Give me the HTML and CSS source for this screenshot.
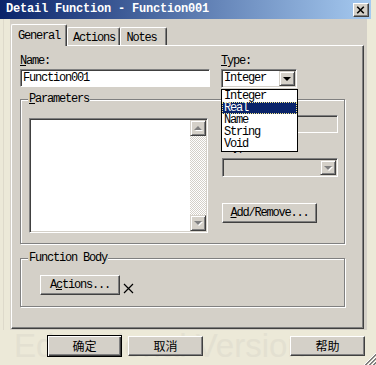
FILE: index.html
```html
<!DOCTYPE html>
<html lang="zh-CN">
<head>
<meta charset="UTF-8">
<title>Detail Function - Function001</title>
<link rel="stylesheet" href="styles.css">
</head>
<body>
<div class="window">
  <!-- 標題列 -->
  <div class="titlebar">
    <span class="title-text">Detail Function - Function001</span>
    <span class="close-btn">
      <svg width="16" height="14" viewBox="0 0 16 14"><path d="M4.5 3.5 L11.5 10.5 M11.5 3.5 L4.5 10.5" stroke="#000" stroke-width="1.7" fill="none"/></svg>
    </span>
  </div>

  <div class="frame">
    <div class="left-strip"></div>
    <div class="dialog">
      <div class="tabs">
        <div class="tab active">General</div>
        <div class="tab tab-actions">Actions</div>
        <div class="tab tab-notes">Notes</div>
      </div>

      <div class="panel">
        <div class="top-row">
          <div class="field name-field">
            <label class="lbl"><u>N</u>ame:</label>
            <div class="edit">Function001</div>
          </div>
          <div class="field type-field">
            <label class="lbl"><u>T</u>ype:</label>
            <div class="combo">
              <span class="combo-text">Integer</span>
              <span class="drop-btn"><i class="arrow-down"></i></span>
            </div>
            <!-- 展開的下拉清單 -->
            <ul class="droplist">
              <li>Integer</li>
              <li class="selected">Real</li>
              <li>Name</li>
              <li>String</li>
              <li>Void</li>
            </ul>
          </div>
        </div>

        <div class="group params-group">
          <div class="group-title"><u>P</u>arameters</div>
          <div class="params-body">
            <div class="listbox">
              <div class="list-area"></div>
              <div class="vscroll">
                <span class="sb-btn"><i class="arrow-up dim"></i></span>
                <span class="sb-track"></span>
                <span class="sb-btn"><i class="arrow-down dim"></i></span>
              </div>
            </div>
            <div class="param-side">
              <div class="edit disabled"></div>
              <label class="lbl side-lbl"><u>T</u>ype:</label>
              <div class="combo disabled">
                <span class="combo-text"></span>
                <span class="drop-btn"><i class="arrow-down dim"></i></span>
              </div>
              <div class="btn add-btn"><u>A</u>dd/Remove...</div>
            </div>
          </div>
        </div>

        <div class="group body-group">
          <div class="group-title">Function Body</div>
          <div class="fb-body">
            <div class="btn actions-btn">A<u>c</u>tions...</div>
            <svg class="x-mark" width="11" height="11" viewBox="0 0 11 11"><path d="M1 1 L10 10 M10 1 L1 10" stroke="#000" stroke-width="1.2" fill="none"/></svg>
          </div>
        </div>
      </div>
    </div>
  </div>

  <div class="footer">
    <div class="watermark">Educational Version</div>
    <div class="btn cjk default">确定</div>
    <div class="btn cjk cancel-btn">取消</div>
    <div class="btn cjk help-btn">帮助</div>
    <svg class="grip" width="13" height="13" viewBox="0 0 13 13">
      <path d="M13 1 L1 13 M13 5 L5 13 M13 9 L9 13" stroke="#fff" fill="none"/>
      <path d="M13 2 L2 13 M13 3 L3 13 M13 6 L6 13 M13 7 L7 13 M13 10 L10 13 M13 11 L11 13" stroke="#808080" fill="none"/>
    </svg>
  </div>
</div>
</body>
</html>
```

FILE: styles.css
```css
html, body {
margin: 0;
padding: 0;
}
body {
background: #ece9d8;
font-family: "Liberation Mono", "Noto Sans CJK SC", monospace;
font-size: 12px;
letter-spacing: -1.2px;
color: #000;
}
.window {
width: 376px; height: 365px;
position: relative;
overflow: hidden;
}

/* 標題列 */
.titlebar {
width: 371px; height: 19px;
box-sizing: border-box;
padding: 0 2px 0 6px;
display: flex; align-items: center; justify-content: space-between;
background: linear-gradient(90deg, #0a246a 0%, #a6caf0 100%);
}
.title-text {
color: #fff;
font-weight: bold;
letter-spacing: -0.2px;
line-height: 19px;
}
.close-btn {
width: 16px; height: 14px;
box-sizing: border-box;
display: flex;
background: #d4d0c8;
border: 1px solid; border-color: #fff #404040 #404040 #fff;
box-shadow: inset -1px -1px #808080;
}
.close-btn svg { margin: -1px 0 0 -1px; }

/* 外框 */
.frame {
display: flex;
height: 311px;
}
.left-strip {
width: 10px;
background: linear-gradient(90deg, #ece9d8 3px, #dedacb 3px, #dedacb 4px, #ece9d8 4px);
}
.dialog {
width: 357px;
background: #d4d0c8;
}

/* 分頁 */
.tabs {
height: 26px;
display: flex; align-items: flex-end;
padding-left: 1px;
}
.tab {
height: 18px;
box-sizing: border-box;
padding-top: 4px;
line-height: 12px;
text-align: center;
border-left: 1px solid #fff;
border-top: 1px solid #fff;
border-right: 1px solid #404040;
box-shadow: inset -1px 0 #808080;
border-radius: 2px 2px 0 0;
}
.tab.active {
width: 56px; height: 22px;
margin-bottom: -1px;
position: relative; z-index: 1;
background: #d4d0c8;
padding-top: 5px;
}
.tab-actions { width: 53px; padding-left: 1px; }
.tab-notes { width: 47px; padding-right: 4px; }

.panel {
width: 353px; height: 284px;
margin-left: 1px;
box-sizing: border-box;
border: 1px solid; border-color: #fff #404040 #404040 #fff;
box-shadow: inset -1px -1px #808080;
padding: 9px 0 0 8px;
}

/* 名稱與型別 */
.top-row {
display: flex;
gap: 11px;
}
.name-field { width: 190px; }
.type-field { width: 76px; position: relative; }
.lbl {
display: block;
height: 13px; line-height: 13px;
margin-bottom: 1px;
}
.edit {
height: 18px;
box-sizing: border-box;
border: 1px solid; border-color: #808080 #fff #fff #808080;
box-shadow: inset 1px 1px #404040;
background: #fff;
padding-left: 2px;
line-height: 16px;
}
.edit.disabled { background: #d4d0c8; width: 116px; }

.combo {
height: 19px;
box-sizing: border-box;
border: 1px solid; border-color: #808080 #fff #fff #808080;
box-shadow: inset 1px 1px #404040, inset -1px -1px #d4d0c8;
background: #fff;
display: flex; align-items: center; justify-content: space-between;
padding: 1px 1px 1px 2px;
}
.combo.disabled { background: #d4d0c8; width: 116px; }
.combo-text { line-height: 15px; }
.drop-btn {
width: 16px; height: 15px;
box-sizing: border-box;
display: flex; align-items: center; justify-content: center;
background: #d4d0c8;
border: 1px solid; border-color: #d4d0c8 #404040 #404040 #d4d0c8;
box-shadow: inset 1px 1px #fff, inset -1px -1px #808080;
}
.arrow-down, .arrow-up {
width: 0; height: 0;
border-left: 4px solid transparent;
border-right: 4px solid transparent;
}
.arrow-down { border-top: 4px solid #000; }
.arrow-up { border-bottom: 4px solid #000; }
.arrow-down.dim { border-top-color: #808080; filter: drop-shadow(1px 1px 0 #fff); }
.arrow-up.dim { border-bottom-color: #808080; filter: drop-shadow(1px 1px 0 #fff); }

.droplist {
position: absolute; top: 34px; left: 0; z-index: 10;
width: 77px;
box-sizing: border-box;
margin: 0; padding: 0 0 1px 0;
list-style: none;
background: #fff;
border: 1px solid #000;
}
.droplist li {
height: 12px; line-height: 12px;
padding-left: 2px;
}
.droplist li.selected {
background: #0a246a;
color: #fff;
outline: 1px dotted #f3e68a;
outline-offset: -1px;
}

/* 群組框 */
.group {
width: 325px;
box-sizing: border-box;
border: 1px solid #808080;
box-shadow: inset 1px 1px #fff, 1px 1px #fff;
}
.group-title {
display: table;
height: 12px; line-height: 12px;
margin: -7px 0 0 7px;
padding: 0 1px;
background: #d4d0c8;
}
.params-group { margin-top: 11px; }
.params-body {
display: flex;
align-items: flex-start;
padding: 13px 0 10px 8px;
}
.listbox {
width: 179px; height: 115px;
box-sizing: border-box;
display: flex;
border: 1px solid; border-color: #808080 #fff #fff #808080;
box-shadow: inset 1px 1px #404040, inset -1px -1px #d4d0c8;
padding: 1px;
}
.list-area { flex: 1; background: #fff; }
.vscroll {
width: 16px;
display: flex; flex-direction: column;
}
.sb-btn {
height: 16px;
box-sizing: border-box;
display: flex; align-items: center; justify-content: center;
background: #d4d0c8;
border: 1px solid; border-color: #d4d0c8 #404040 #404040 #d4d0c8;
box-shadow: inset 1px 1px #fff, inset -1px -1px #808080;
}
.sb-track {
flex: 1;
background: repeating-conic-gradient(#fff 0 25%, #d4d0c8 0 50%) 0 0 / 2px 2px;
}
.param-side {
margin: -3px 0 0 14px;
}
.side-lbl { margin: 8px 0 4px 5px; }
.add-btn {
width: 95px;
margin-top: 26px;
}

.body-group { margin-top: 14px; }
.fb-body {
display: flex; align-items: flex-end;
padding: 11px 0 11px 19px;
}
.actions-btn { width: 80px; }
.x-mark { margin: 0 0 1px 3px; }

/* 按鈕 */
.btn {
height: 20px;
box-sizing: border-box;
background: #d4d0c8;
border: 1px solid; border-color: #fff #404040 #404040 #fff;
box-shadow: inset -1px -1px #808080;
text-align: center;
line-height: 18px;
}

/* 底部按鈕列 */
.footer {
height: 35px;
position: relative;
display: flex; align-items: flex-start;
box-sizing: border-box;
padding: 6px 11px 0 47px;
}
.watermark {
position: absolute; left: 14px; top: -3px;
font-family: "Liberation Sans", sans-serif;
font-size: 33px;
letter-spacing: 0;
white-space: nowrap;
color: #e3e0d1;
}
.btn.cjk {
position: relative;
width: 75px;
font-family: "Noto Sans CJK SC", sans-serif;
font-size: 12px;
letter-spacing: 0;
}
.btn.default {
height: 22px;
margin-top: -1px;
border: 1px solid #000;
box-shadow: inset 1px 1px #fff, inset -1px -1px #404040, inset -2px -2px #808080;
line-height: 20px;
}
.cancel-btn { margin-left: 6px; }
.help-btn { margin-left: auto; }
.grip {
position: absolute; right: 0; bottom: 0;
}
```
